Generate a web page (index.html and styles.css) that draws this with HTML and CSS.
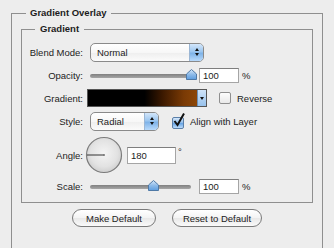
FILE: index.html
```html
<!DOCTYPE html>
<html lang="en">
<head>
    <meta charset="UTF-8">
    <title>Gradient Overlay</title>
    <link rel="stylesheet" href="styles.css">
</head>
<body>
    <fieldset class="outer">
        <legend>Gradient Overlay</legend>
        <fieldset class="inner">
            <legend>Gradient</legend>
            <div class="grid">
                <span class="label">Blend Mode:</span>
                <div class="select select-wide">
                    <span class="select-text">Normal</span>
                    <span class="select-arrows"><i class="up"></i><i class="down"></i></span>
                </div>

                <span class="label">Opacity:</span>
                <div class="control-row">
                    <div class="slider">
                        <div class="track"></div>
                        <svg class="thumb" style="left: 96px" width="11" height="11" viewBox="0 0 11 11">
                            <defs>
                                <linearGradient id="tg1" x1="0" y1="0" x2="0" y2="1">
                                    <stop offset="0" stop-color="#d6e8fa"/>
                                    <stop offset="0.5" stop-color="#8ebbe9"/>
                                    <stop offset="1" stop-color="#5d9ddf"/>
                                </linearGradient>
                            </defs>
                            <path d="M0.5 5 L5.5 0.5 L10.5 5 L10.5 10.5 L0.5 10.5 Z" fill="url(#tg1)" stroke="#4f79a6"/>
                        </svg>
                    </div>
                    <span class="field">100</span>
                    <span class="unit">%</span>
                </div>

                <span class="label">Gradient:</span>
                <div class="control-row gradient-row">
                    <div class="gradient-bar">
                        <div class="swatch"></div>
                        <div class="swatch-arrow"><i></i></div>
                    </div>
                    <span class="checkbox"></span>
                    <span class="check-label">Reverse</span>
                </div>

                <span class="label">Style:</span>
                <div class="control-row">
                    <div class="select select-narrow">
                        <span class="select-text">Radial</span>
                        <span class="select-arrows"><i class="up"></i><i class="down"></i></span>
                    </div>
                    <span class="checkbox checked">
                        <svg width="14" height="16" viewBox="0 0 14 16">
                            <path d="M2.5 9 L5.5 13 L12 1.5" fill="none" stroke="#111" stroke-width="2"/>
                        </svg>
                    </span>
                    <span class="check-label">Align with Layer</span>
                </div>

                <span class="label">Angle:</span>
                <div class="control-row">
                    <svg class="dial" width="38" height="38" viewBox="0 0 38 38">
                        <defs>
                            <radialGradient id="dg" cx="0.5" cy="0.45" r="0.55">
                                <stop offset="0" stop-color="#f4f4f4"/>
                                <stop offset="0.7" stop-color="#e2e2e2"/>
                                <stop offset="1" stop-color="#cfcfcf"/>
                            </radialGradient>
                        </defs>
                        <circle cx="19" cy="19" r="17.5" fill="url(#dg)" stroke="#7c7c7c" stroke-width="1.2"/>
                        <line x1="2" y1="19" x2="19" y2="19" stroke="#333" stroke-width="1"/>
                        <circle cx="19" cy="19" r="1" fill="#777"/>
                    </svg>
                    <span class="field field-angle">180</span>
                    <span class="unit deg">°</span>
                </div>

                <span class="label">Scale:</span>
                <div class="control-row">
                    <div class="slider">
                        <div class="track"></div>
                        <svg class="thumb" style="left: 58px" width="11" height="11" viewBox="0 0 11 11">
                            <defs>
                                <linearGradient id="tg2" x1="0" y1="0" x2="0" y2="1">
                                    <stop offset="0" stop-color="#d6e8fa"/>
                                    <stop offset="0.5" stop-color="#8ebbe9"/>
                                    <stop offset="1" stop-color="#5d9ddf"/>
                                </linearGradient>
                            </defs>
                            <path d="M0.5 5 L5.5 0.5 L10.5 5 L10.5 10.5 L0.5 10.5 Z" fill="url(#tg2)" stroke="#4f79a6"/>
                        </svg>
                    </div>
                    <span class="field">100</span>
                    <span class="unit">%</span>
                </div>
            </div>
        </fieldset>
        <div class="buttons">
            <button class="btn btn-make">Make Default</button>
            <button class="btn btn-reset">Reset to Default</button>
        </div>
    </fieldset>
</body>
</html>
```

FILE: styles.css
```css
body {
    margin: 0;
    background-color: #ededed;
    font-family: "Liberation Sans", Arial, sans-serif;
    font-size: 9.5px;
    color: #1c1c1c;
}

fieldset {
    min-width: 0;
}

legend {
    font-weight: bold;
    line-height: 12px;
}

/* the outer box runs off the bottom of the panel, so no bottom edge */
.outer {
    margin: 7px 0 0 11px;
    width: 312px;
    box-sizing: border-box;
    border: 1px solid #8f8f8f;
    border-bottom: none;
    padding: 4px 9px 21px 9px;
}

.outer > legend {
    margin-left: 5px;
    padding: 0 4px;
}

.inner {
    margin: 0;
    border: 1px solid #8f8f8f;
    padding: 7px 0 6px 0;
}

.inner > legend {
    margin-left: 13px;
    padding: 0 5px;
}

.grid {
    display: grid;
    grid-template-columns: 61px auto;
    grid-template-rows: 20px 26px 20px 26px 42px 20px;
    column-gap: 7px;
    align-items: center;
}

.label {
    text-align: right;
}

.control-row {
    display: flex;
    align-items: center;
}

/* popup menus */
.select {
    display: flex;
    height: 19px;
    box-sizing: border-box;
    border: 1px solid #8a8a8a;
    border-radius: 5px;
    background: linear-gradient(#ffffff, #f7f7f7 50%, #eeeeee 51%, #fbfbfb);
    overflow: hidden;
}

.select-wide {
    width: 114px;
}

.select-narrow {
    width: 69px;
}

.select-text {
    flex: 1;
    padding-left: 6px;
    line-height: 17px;
}

.select-arrows {
    width: 13px;
    display: flex;
    flex-direction: column;
    align-items: center;
    justify-content: center;
    gap: 2px;
    background: linear-gradient(#d3e6fa, #9cc6ef 45%, #7fb3e8 55%, #b9dafb);
    border-left: 1px solid #9bb6d4;
}

.select-arrows i {
    width: 0;
    height: 0;
    border-left: 2.5px solid transparent;
    border-right: 2.5px solid transparent;
}

.select-arrows .up {
    border-bottom: 3px solid #111;
}

.select-arrows .down {
    border-top: 3px solid #111;
}

/* sliders */
.slider {
    position: relative;
    width: 106px;
    height: 14px;
}

.track {
    position: absolute;
    left: 0;
    top: 6px;
    width: 101px;
    height: 4px;
    border-radius: 2px;
    background: linear-gradient(#808080, #a6a6a6);
}

.thumb {
    position: absolute;
    top: 1px;
}

.field {
    width: 40px;
    height: 15px;
    box-sizing: border-box;
    margin-left: 3px;
    padding-left: 3px;
    line-height: 14px;
    background-color: #fff;
    border: 1px solid #a5a5a5;
    border-top-color: #7e7e7e;
}

.field-angle {
    width: 49px;
    height: 17px;
    line-height: 16px;
    margin-left: 4px;
}

.unit {
    margin-left: 3px;
}

.deg {
    align-self: flex-start;
    margin-top: 10px;
    margin-left: 2px;
}

/* gradient picker */
.gradient-row {
    margin-left: -3px;
}

.gradient-bar {
    display: flex;
    width: 120px;
    height: 18px;
    box-sizing: border-box;
    border: 1px solid #555;
}

.swatch {
    flex: 1;
    background: linear-gradient(to right, #000 0%, #000 52%, #3a1800 68%, #7a3a05 88%, #8c4607 100%);
}

.swatch-arrow {
    width: 8px;
    display: flex;
    align-items: center;
    justify-content: center;
    background: linear-gradient(#cfe3f8, #98c2ec);
    border-left: 1px solid #6e8fb4;
}

.swatch-arrow i {
    width: 0;
    height: 0;
    border-left: 2px solid transparent;
    border-right: 2px solid transparent;
    border-top: 3px solid #111;
}

.checkbox {
    position: relative;
    width: 12px;
    height: 12px;
    box-sizing: border-box;
    margin-left: 12px;
    border: 1px solid #8f8f8f;
    border-radius: 2px;
    background: linear-gradient(#fdfdfd, #e9e9e9);
}

.checkbox.checked {
    margin-left: 13px;
    margin-top: 4px;
    border-color: #5b7fa8;
    background: linear-gradient(#d5e7fa, #8dbbea 50%, #6aa6e6 55%, #bcdcfb);
}

.checkbox svg {
    position: absolute;
    left: -1px;
    top: -6px;
}

.check-label {
    margin-left: 6px;
}

.dial {
    margin-left: -5px;
}

/* buttons */
.buttons {
    display: flex;
    justify-content: center;
    gap: 16px;
    margin-top: 6px;
}

.btn {
    height: 18px;
    padding: 0;
    font-family: inherit;
    font-size: 9.5px;
    color: #1c1c1c;
    border: 1px solid #7a7a7a;
    border-radius: 9px;
    background: linear-gradient(#ffffff, #f3f3f3 50%, #e8e8e8 51%, #fafafa);
}

.btn-make {
    width: 84px;
}

.btn-reset {
    width: 90px;
}
```
